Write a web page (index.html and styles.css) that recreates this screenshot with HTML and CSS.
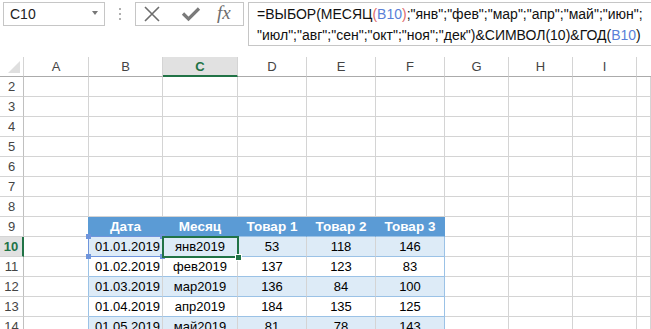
FILE: index.html
```html
<!DOCTYPE html>
<html lang="ru">
<head>
    <meta charset="UTF-8">
    <title>Лист1</title>
    <link rel="stylesheet" href="styles.css">
</head>
<body>
    <div class="toolbar">
        <div class="name-box">
            <span>C10</span>
            <span class="dropdown"></span>
        </div>
        <div class="grip"><i></i><i></i><i></i></div>
        <div class="buttons">
            <svg class="btn-x" width="18" height="18" viewBox="0 0 18 18">
                <path d="M2 2 L16 16 M16 2 L2 16" stroke="#6d6d6d" stroke-width="1.6" fill="none"/>
            </svg>
            <svg class="btn-ok" width="20" height="18" viewBox="0 0 20 18">
                <path d="M2 8.5 L7.5 14 L18 3.5" stroke="#7a7a7a" stroke-width="3.2" fill="none"/>
            </svg>
            <span class="fx">fx</span>
        </div>
        <div class="formula">
            =ВЫБОР(МЕСЯЦ<span class="paren">(</span><span class="ref">B10</span><span class="paren">)</span>;"янв";"фев";"мар";"апр";"май";"июн";<br>"июл";"авг";"сен";"окт";"ноя";"дек")&amp;СИМВОЛ(10)&amp;ГОД(<span class="ref">B10</span>)
        </div>
    </div>

    <table class="sheet">
        <thead>
            <tr>
                <th class="corner"><svg width="24" height="19" viewBox="0 0 24 19"><polygon points="20,4 20,16 8,16" fill="#dfdfdf"/></svg></th>
                <th class="col-a">A</th>
                <th class="col-b">B</th>
                <th class="col-c active">C</th>
                <th class="col-d">D</th>
                <th class="col-e">E</th>
                <th class="col-f">F</th>
                <th class="col-g">G</th>
                <th class="col-h">H</th>
                <th class="col-i">I</th>
                <th class="col-j"></th>
            </tr>
        </thead>
        <tbody>
            <tr><td class="rh">2</td><td></td><td></td><td></td><td></td><td></td><td></td><td></td><td></td><td></td><td></td></tr>
            <tr><td class="rh">3</td><td></td><td></td><td></td><td></td><td></td><td></td><td></td><td></td><td></td><td></td></tr>
            <tr><td class="rh">4</td><td></td><td></td><td></td><td></td><td></td><td></td><td></td><td></td><td></td><td></td></tr>
            <tr><td class="rh">5</td><td></td><td></td><td></td><td></td><td></td><td></td><td></td><td></td><td></td><td></td></tr>
            <tr><td class="rh">6</td><td></td><td></td><td></td><td></td><td></td><td></td><td></td><td></td><td></td><td></td></tr>
            <tr><td class="rh">7</td><td></td><td></td><td></td><td></td><td></td><td></td><td></td><td></td><td></td><td></td></tr>
            <tr><td class="rh">8</td><td></td><td></td><td></td><td></td><td></td><td></td><td></td><td></td><td></td><td></td></tr>
            <tr class="head-row">
                <td class="rh">9</td><td class="edge"></td>
                <td class="th">Дата</td><td class="th">Месяц</td><td class="th">Товар 1</td><td class="th">Товар 2</td><td class="th">Товар 3</td>
                <td></td><td></td><td></td><td></td>
            </tr>
            <tr class="band">
                <td class="rh active">10</td><td class="edge"></td>
                <td class="date ref-cell">01.01.2019<span class="ref-box"><i class="h tl"></i><i class="h tr"></i><i class="h bl"></i><i class="h br"></i></span></td>
                <td class="cur-cell">янв2019<span class="cur-box"><i class="fill"></i></span></td>
                <td>53</td><td>118</td><td class="last">146</td>
                <td></td><td></td><td></td><td></td>
            </tr>
            <tr class="plain">
                <td class="rh">11</td><td class="edge"></td>
                <td class="date">01.02.2019</td><td>фев2019</td><td>137</td><td>123</td><td class="last">83</td>
                <td></td><td></td><td></td><td></td>
            </tr>
            <tr class="band">
                <td class="rh">12</td><td class="edge"></td>
                <td class="date">01.03.2019</td><td>мар2019</td><td>136</td><td>84</td><td class="last">100</td>
                <td></td><td></td><td></td><td></td>
            </tr>
            <tr class="plain">
                <td class="rh">13</td><td class="edge"></td>
                <td class="date">01.04.2019</td><td>апр2019</td><td>184</td><td>135</td><td class="last">125</td>
                <td></td><td></td><td></td><td></td>
            </tr>
            <tr class="band">
                <td class="rh">14</td><td class="edge"></td>
                <td class="date">01.05.2019</td><td>май2019</td><td>81</td><td>78</td><td class="last">143</td>
                <td></td><td></td><td></td><td></td>
            </tr>
        </tbody>
    </table>
</body>
</html>
```

FILE: styles.css
```css
body {
    margin: 0;
    width: 651px;
    height: 329px;
    overflow: hidden;
    background: #fff;
    font-family: "Liberation Sans", Arial, sans-serif;
    color: #000;
}

/* верхняя панель */
.toolbar {
    display: flex;
    align-items: flex-start;
    height: 57px;
    padding-top: 2px;
    box-sizing: border-box;
}
.name-box {
    margin-left: 3px;
    width: 102px;
    height: 24px;
    box-sizing: border-box;
    border: 1px solid #c6c6c6;
    display: flex;
    align-items: center;
    justify-content: space-between;
    padding: 0 6px 0 6px;
    font-size: 14px;
    color: #222;
}
.dropdown {
    width: 0;
    height: 0;
    border-top: 4px solid #777;
    border-left: 3.5px solid transparent;
    border-right: 3.5px solid transparent;
    margin-top: -3px;
}
.grip {
    margin: 6px 0 0 14px;
    display: flex;
    flex-direction: column;
    gap: 3px;
}
.grip i {
    display: block;
    width: 2px;
    height: 2px;
    background: #b0b0b0;
}
.buttons {
    margin-left: 14px;
    width: 109px;
    height: 24px;
    box-sizing: border-box;
    border: 1px solid #c6c6c6;
    display: flex;
    align-items: center;
    padding-left: 7px;
}
.btn-x {
    margin-right: 20px;
}
.btn-ok {
    margin-right: 16px;
}
.fx {
    font-family: "Liberation Serif", "Times New Roman", serif;
    font-style: italic;
    font-size: 19px;
    color: #6d6d6d;
    margin-top: -2px;
}
.formula {
    margin-left: 4px;
    flex: 1;
    height: 44px;
    box-sizing: border-box;
    border: 1px solid #c6c6c6;
    border-right: none;
    padding: 1px 0 0 8px;
    font-size: 14px;
    line-height: 21px;
    white-space: nowrap;
    overflow: hidden;
    color: #111;
}
.formula .ref {
    color: #5a7fd8;
}
.formula .paren {
    color: #e06a6a;
}

/* лист */
.sheet {
    border-spacing: 0;
    table-layout: fixed;
    width: 651px;
}
.sheet th,
.sheet td {
    height: 20px;
    box-sizing: border-box;
    padding: 0 2px;
    border-right: 1px solid #d4d4d4;
    border-bottom: 1px solid #d4d4d4;
    font-size: 13px;
    font-weight: normal;
    text-align: center;
    white-space: nowrap;
    overflow: hidden;
}
.sheet th {
    color: #444;
    border-bottom-color: #ababab;
}
.corner { width: 24px; padding: 0 !important; vertical-align: top; }
.corner svg { display: block; }
.col-a { width: 65px; }
.col-b { width: 74px; }
.col-c { width: 75px; }
.col-d, .col-e, .col-f { width: 69px; }
.col-g, .col-h, .col-i { width: 64px; }
.col-j { width: 14px; border-right: none !important; }

.sheet th.active {
    background: #e1e1e1;
    color: #217346;
    font-weight: bold;
    border-bottom: 2px solid #217346;
}
.sheet td.rh {
    color: #444;
    border-right-color: #c0c0c0;
}
.sheet td.rh.active {
    background: #e1e1e1;
    color: #217346;
    font-weight: bold;
    border-right: 2px solid #217346;
}

/* таблица с данными */
.head-row td.edge { border-right-color: #5b9bd5; }
.head-row td.th {
    background: #5b9bd5;
    color: #fff;
    font-weight: bold;
    font-size: 13.5px;
    border-right-color: #5b9bd5;
    border-bottom-color: #9bc2e6;
}
.band td:nth-child(n+3):nth-child(-n+7) { background: #ddebf7; }
.band td:nth-child(n+3):nth-child(-n+7),
.plain td:nth-child(n+3):nth-child(-n+7) {
    border-bottom-color: #9bc2e6;
}
.band td.edge,
.plain td.edge,
.sheet td.last {
    border-right-color: #9bc2e6;
}
.sheet td.date {
    text-align: right;
}

/* выделение */
.ref-cell,
.cur-cell {
    position: relative;
    overflow: visible !important;
}
.band td.ref-cell { background: #d2e1f6; }
.ref-box {
    position: absolute;
    left: -1px;
    top: -1px;
    right: -1px;
    bottom: -1px;
    border: 1px solid #6f95dc;
}
.ref-box .h {
    position: absolute;
    width: 5px;
    height: 5px;
    background: #6f95dc;
}
.ref-box .tl { left: -3px; top: -3px; }
.ref-box .tr { right: -3px; top: -3px; }
.ref-box .bl { left: -3px; bottom: -3px; }
.ref-box .br { right: -3px; bottom: -3px; }
.cur-box {
    position: absolute;
    left: -1px;
    top: -1px;
    right: -2px;
    bottom: -2px;
    border: 2px solid #217346;
    z-index: 2;
}
.cur-box .fill {
    position: absolute;
    right: -5px;
    bottom: -5px;
    width: 5px;
    height: 5px;
    background: #217346;
    border: 1px solid #fff;
}
```
